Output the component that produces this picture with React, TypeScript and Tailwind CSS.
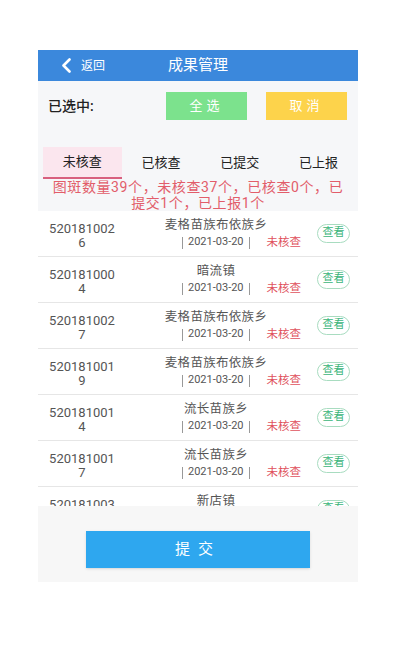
import React from 'react';

const rows = [
  { code: '5201810026', town: '麦格苗族布依族乡' },
  { code: '5201810004', town: '暗流镇' },
  { code: '5201810027', town: '麦格苗族布依族乡' },
  { code: '5201810019', town: '麦格苗族布依族乡' },
  { code: '5201810014', town: '流长苗族乡' },
  { code: '5201810017', town: '流长苗族乡' },
  { code: '5201810031', town: '新店镇' },
];

const tabs = ['未核查', '已核查', '已提交', '已上报'];

export default function App() {
  return (
    <div
      className="w-[400px] h-[666px] bg-white pt-[50px] pl-[38px]"
      style={{ fontFamily: 'Roboto, "Noto Sans CJK SC", sans-serif' }}
    >
      <div className="w-[320px] flex flex-col">
        {/* header */}
        <div className="h-[31px] bg-[#3b88dc] flex items-center relative">
          <div className="flex items-center pl-[23px] gap-[9px]">
            <svg width="11" height="15" viewBox="0 0 11 15">
              <path d="M8.5 1.5 L2.5 7.5 L8.5 13.5" stroke="white" strokeWidth="2.6" fill="none" strokeLinecap="round" strokeLinejoin="round" />
            </svg>
            <span className="text-white text-[12px]">返回</span>
          </div>
          <span className="absolute left-0 right-0 text-center text-white text-[15px] pointer-events-none">成果管理</span>
        </div>

        {/* top section */}
        <div className="bg-[#f6f7f9]">
          <div className="h-[50px] flex items-center pl-[10px] pr-[11px]">
            <span className="text-[14px] text-[#222] font-medium">已选中:</span>
            <div className="ml-auto flex gap-[19px]">
              <div className="w-[81px] h-[28px] bg-[#7ce28d] text-white text-[13px] tracking-[4px] flex items-center justify-center">全选</div>
              <div className="w-[81px] h-[28px] bg-[#fdd34b] text-white text-[13px] tracking-[4px] flex items-center justify-center">取消</div>
            </div>
          </div>
          <div className="h-[16px]" />
          <div className="flex pl-[5px]">
            {tabs.map((t, i) => (
              <div
                key={t}
                className={
                  i === 0
                    ? 'flex-1 h-[32px] bg-[#fbe6ee] border-b-2 border-[#d8607e] flex items-center justify-center text-[13px] text-[#222]'
                    : 'flex-1 h-[32px] flex items-center justify-center text-[13px] text-[#222]'
                }
              >
                {t}
              </div>
            ))}
          </div>
          <div className="px-[12px] text-center text-[14px] leading-[16px] tracking-[0.6px] text-[#e25d6a]">
            图斑数量39个，未核查37个，已核查0个，已提交1个，已上报1个
          </div>
        </div>

        {/* list */}
        <div className="h-[295px] overflow-hidden bg-white">
          {rows.map((r) => (
            <div key={r.code} className="h-[46px] border-b border-[#e6e6e6] flex items-center">
              <div className="w-[68px] ml-[10px] pt-[4px] text-center text-[13px] leading-[14px] text-[#555] break-all">
                {r.code}
              </div>
              <div className="w-[200px] flex flex-col">
                <div className="text-center text-[12.5px] leading-[18px] tracking-[0.3px] text-[#555]">{r.town}</div>
                <div className="flex items-center h-[18px] pl-[66px] text-[11px] text-[#555]">
                  <span className="w-px h-[12px] bg-[#999]" />
                  <span className="px-[5px]">2021-03-20</span>
                  <span className="w-px h-[12px] bg-[#999]" />
                  <span className="ml-[17px] text-[#e0525d] text-[11.5px]">未核查</span>
                </div>
              </div>
              <div className="ml-[1px] w-[33px] h-[19px] rounded-full border border-[#a8dcc0] text-[#3bb57a] text-[11px] flex items-center justify-center">
                查看
              </div>
            </div>
          ))}
        </div>

        {/* bottom */}
        <div className="h-[76px] bg-[#f7f7f7] flex justify-center pt-[25px]">
          <div className="w-[224px] h-[37px] bg-[#2ea7ef] shadow-sm text-white text-[15px] tracking-[8px] flex items-center justify-center">
            提交
          </div>
        </div>
      </div>
    </div>
  );
}
